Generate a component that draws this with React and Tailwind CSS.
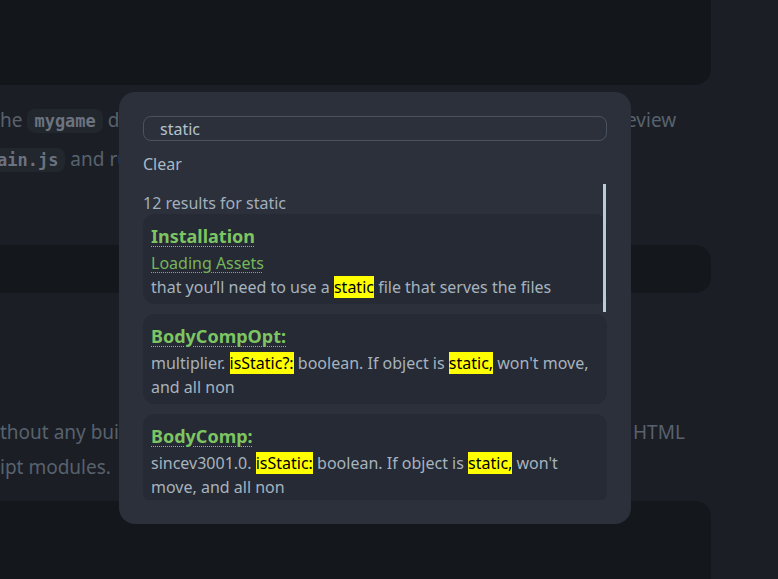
import React from "react";

const results = [
  {
    title: "Installation",
    sub: "Loading Assets",
    body: ["that you’ll need to use a ", { hit: "static" }, " file that serves the files"],
  },
  {
    title: "BodyCompOpt:",
    body: [
      "multiplier. ",
      { hit: "isStatic?:" },
      " boolean. If object is ",
      { hit: "static," },
      " won't move, and all non",
    ],
  },
  {
    title: "BodyComp:",
    body: [
      "sincev3001.0. ",
      { hit: "isStatic:" },
      " boolean. If object is ",
      { hit: "static," },
      " won't move, and all non",
    ],
  },
];

function Code({ children }) {
  return (
    <code className="rounded-lg bg-[#22262d] px-[7px] py-[2px] font-['DejaVu_Sans_Mono',monospace] text-[17px] font-bold text-[#6b7380]">
      {children}
    </code>
  );
}

function ResultCard({ item }) {
  return (
    <a className="block rounded-xl bg-[#252a34] px-2 pt-[10px] pb-[5px]">
      <div className="text-[18px] font-bold leading-[24px] text-[#7dc462] underline decoration-dotted decoration-1 underline-offset-[3px]">
        {item.title}
      </div>
      {item.sub && (
        <div className="mt-[3px] leading-[24px] text-[#75b65a] underline decoration-dotted decoration-1 underline-offset-[3px]">
          {item.sub}
        </div>
      )}
      <p className={`${item.sub ? "" : "mt-[3px]"} leading-[24px] text-[#a6b3bf]`}>
        {item.body.map((part, i) =>
          typeof part === "string" ? (
            <span key={i}>{part}</span>
          ) : (
            <mark key={i} className="bg-[#ffff00] text-black">
              {part.hit}
            </mark>
          )
        )}
      </p>
    </a>
  );
}

export default function App() {
  return (
    <div className="relative h-[579px] w-[778px] overflow-hidden bg-[#1b1e24] font-['Noto_Sans',sans-serif] text-[#58626e]">
      {/* page content behind the search dialog */}
      <div className="flex w-[711px] flex-col">
        <div className="h-[85px] rounded-br-2xl bg-[#13161b]" />

        <div className="mt-[16px] text-[19px] leading-[38px]">
          <div className="flex whitespace-nowrap">
            <span className="w-[626px] overflow-hidden">
              he <Code>mygame</Code> directory in your editor and open the preview
            </span>
            <span>eview</span>
          </div>
          <div className="-ml-[10px] whitespace-nowrap">
            <Code>ain.js</Code> and run it
          </div>
        </div>

        <div className="mt-[66px] h-[48px] rounded-r-2xl bg-[#14171c]" />

        <div className="mt-[122px] text-[19px] leading-[35px]">
          <div className="flex whitespace-nowrap">
            <span className="w-[633px] overflow-hidden">thout any build step, just an index file with</span>
            <span>HTML</span>
          </div>
          <div className="whitespace-nowrap">ipt modules.</div>
        </div>

        <div className="mt-[16px] h-[100px] rounded-tr-2xl bg-[#14171c]" />
      </div>

      {/* search dialog */}
      <div className="absolute left-[119px] top-[92px] flex h-[432px] w-[512px] flex-col rounded-2xl bg-[#2b303b] p-6 text-[16px] text-[#a6b3bf]">
        <div className="flex h-[25px] items-center rounded-lg border border-[#4a5260] pl-4 pt-[1px] text-[#b2c2ce]">
          static
        </div>
        <button className="mt-[11px] self-start leading-[24px] text-[#a9b8c4]">Clear</button>

        <div className="relative mt-[8px] flex-1 overflow-hidden">
          <div className="pt-[8px]">
            <div className="leading-[22px] text-[#a2afbb]">12 results for static</div>
            <div className="flex flex-col gap-[10px]">
              {results.map((r) => (
                <ResultCard key={r.title} item={r} />
              ))}
            </div>
          </div>
          <div className="absolute right-[1px] top-0 h-[128px] w-[3px] bg-[#b4cdd6]" />
        </div>
      </div>
    </div>
  );
}
